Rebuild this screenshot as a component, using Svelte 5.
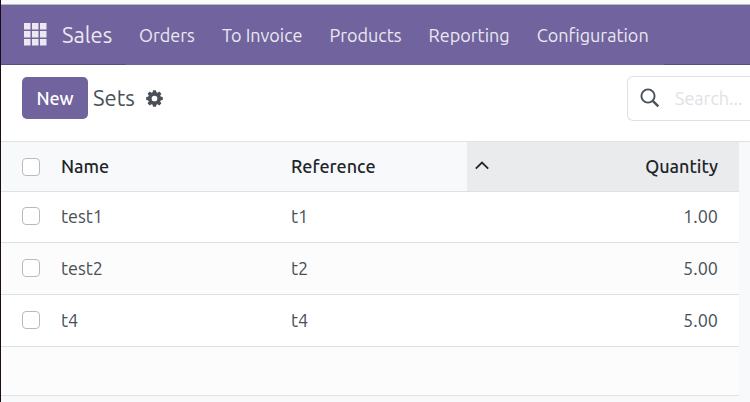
<script>
  const menus = ['Orders', 'To Invoice', 'Products', 'Reporting', 'Configuration'];
  const rows = [
    { name: 'test1', reference: 't1', quantity: 1 },
    { name: 'test2', reference: 't2', quantity: 5 },
    { name: 't4', reference: 't4', quantity: 5 }
  ];
  const tiles = [0, 8, 16];
  const teeth = [0, 45, 90, 135, 180, 225, 270, 315];
</script>

<div class="app">
  <header>
    <div class="brand">
      <button class="apps" aria-label="Home menu">
        <svg width="23" height="23" viewBox="0 0 23 23" fill="currentColor" aria-hidden="true">
          {#each tiles as y}
            {#each tiles as x}
              <rect {x} {y} width="6.5" height="6.5" />
            {/each}
          {/each}
        </svg>
      </button>
      <a class="title" href="#sales">Sales</a>
    </div>
    <nav>
      {#each menus as menu}
        <a href="#menu">{menu}</a>
      {/each}
    </nav>
    <div class="tray"></div>
  </header>

  <section class="panel">
    <button class="new">New</button>
    <h1>Sets</h1>
    <button class="gear" aria-label="Actions">
      <svg width="17" height="17" viewBox="0 0 16 16" aria-hidden="true">
        <g fill="currentColor">
          {#each teeth as angle}
            <path d="M6.1 3 L6.6 0.2 H9.4 L9.9 3 Z" transform="rotate({angle} 8 8)" />
          {/each}
        </g>
        <circle cx="8" cy="8" r="4.4" fill="none" stroke="currentColor" stroke-width="3.4" />
      </svg>
    </button>
    <label class="search">
      <svg width="20" height="20" viewBox="0 0 20 20" fill="none" stroke="currentColor" aria-hidden="true">
        <circle cx="8" cy="8" r="6.6" stroke-width="1.9" />
        <path d="M12.8 12.8 L18.3 18.3" stroke-width="2.4" />
      </svg>
      <input type="text" placeholder="Search..." aria-label="Search" />
    </label>
  </section>

  <main>
    <table>
      <colgroup>
        <col class="pick" />
        <col class="name" />
        <col class="reference" />
        <col />
      </colgroup>
      <thead>
        <tr>
          <th><input type="checkbox" aria-label="Select all" /></th>
          <th>Name</th>
          <th>Reference</th>
          <th class="sorted" aria-sort="ascending">
            <div>
              <svg width="14" height="9" viewBox="0 0 14 9" fill="none" stroke="currentColor" stroke-width="1.8" aria-hidden="true">
                <path d="M0.8 7.7 L7 1.6 L13.2 7.7" />
              </svg>
              <span>Quantity</span>
            </div>
          </th>
        </tr>
      </thead>
      <tbody>
        {#each rows as row}
          <tr>
            <td><input type="checkbox" aria-label="Select {row.name}" /></td>
            <td>{row.name}</td>
            <td>{row.reference}</td>
            <td class="number">{row.quantity.toFixed(2)}</td>
          </tr>
        {/each}
        <tr class="empty"><td colspan="4"></td></tr>
      </tbody>
    </table>
  </main>
</div>

<style>
  :global(body) {
    background: #f8f9fa;
  }
  .app {
    border-left: 1px solid #1d0c18;
    min-height: 100vh;
    box-sizing: border-box;
    overflow: hidden;
    font: 18px/24px Ubuntu, 'Noto Sans', sans-serif;
    color: #495057;
    background: #f8f9fb;
  }
  button {
    font: inherit;
    border: 0;
    padding: 0;
    background: none;
    color: inherit;
  }
  a {
    color: inherit;
    text-decoration: none;
  }
  svg {
    display: block;
  }
  header {
    display: flex;
    height: 60px;
    border-top: 1px solid #bbb;
    box-shadow: 0 -4px #fafafa;
    margin-top: 4px;
    background: #71639e;
    color: #ebe8f1;
    white-space: nowrap;
  }
  .brand {
    display: flex;
    align-items: center;
    gap: 15px;
    width: 125px;
    box-sizing: border-box;
    padding-left: 23px;
    border-bottom: 1px solid #5a4f7f;
  }
  .title {
    font-size: 22px;
  }
  nav {
    display: flex;
    align-items: center;
    gap: 27px;
    padding: 0 15px 0 13px;
  }
  .tray {
    flex: 1;
    border-bottom: 1px solid #5a4f7f;
  }
  .panel {
    display: flex;
    align-items: center;
    height: 66px;
    padding: 0 0 10px 21px;
    background: #fff;
    border-bottom: 1px solid #dee2e6;
  }
  .new {
    height: 42px;
    width: 66px;
    border-radius: 5px;
    background: #71639e;
    color: #fff;
    font-weight: 500;
  }
  h1 {
    margin: 0 11px 0 5px;
    font-size: 22px;
    font-weight: 400;
  }
  .search {
    display: flex;
    align-items: center;
    gap: 15px;
    width: 123px;
    height: 45px;
    box-sizing: border-box;
    margin-left: auto;
    padding-left: 12px;
    border: 1px solid #dee2e6;
    border-right: 0;
    border-radius: 6px 0 0 6px;
  }
  .search svg {
    flex: none;
  }
  .search input {
    flex: 1;
    min-width: 0;
    padding: 0;
    border: 0;
    outline: 0;
    font: inherit;
    background: none;
  }
  .search input::placeholder {
    color: #dee2e6;
    opacity: 1;
  }
  main {
    padding-right: 11px;
  }
  table {
    width: 100%;
    table-layout: fixed;
    border-collapse: separate;
    border-spacing: 0;
  }
  .pick {
    width: 51px;
  }
  .name {
    width: 230px;
  }
  .reference {
    width: 185px;
  }
  th,
  td {
    height: 49px;
    padding: 0 9px 2px;
    text-align: left;
    border-bottom: 1px solid #dee2e6;
  }
  th {
    height: 47px;
    font-weight: 500;
    color: #212529;
  }
  th:first-child,
  td:first-child {
    padding-left: 21px;
    padding-right: 0;
  }
  th:first-child {
    height: 49px;
    padding-bottom: 0;
  }
  th.sorted {
    padding-left: 8px;
    padding-right: 21px;
    background: #eaebed;
  }
  .sorted div {
    display: flex;
    align-items: center;
    justify-content: space-between;
  }
  td.number {
    padding-right: 21px;
    text-align: right;
  }
  tbody tr {
    background: #fff;
  }
  tbody tr:nth-child(even) {
    background: #fcfcfc;
  }
  tbody tr:first-child td {
    height: 48px;
  }
  .empty td {
    height: 46px;
  }
  input[type='checkbox'] {
    appearance: none;
    display: block;
    width: 18px;
    height: 18px;
    margin: 0;
    border: 1px solid #b8babc;
    border-radius: 4px;
    background: #fff;
  }
  input[type='checkbox']:checked {
    background: #71639e;
  }
</style>
